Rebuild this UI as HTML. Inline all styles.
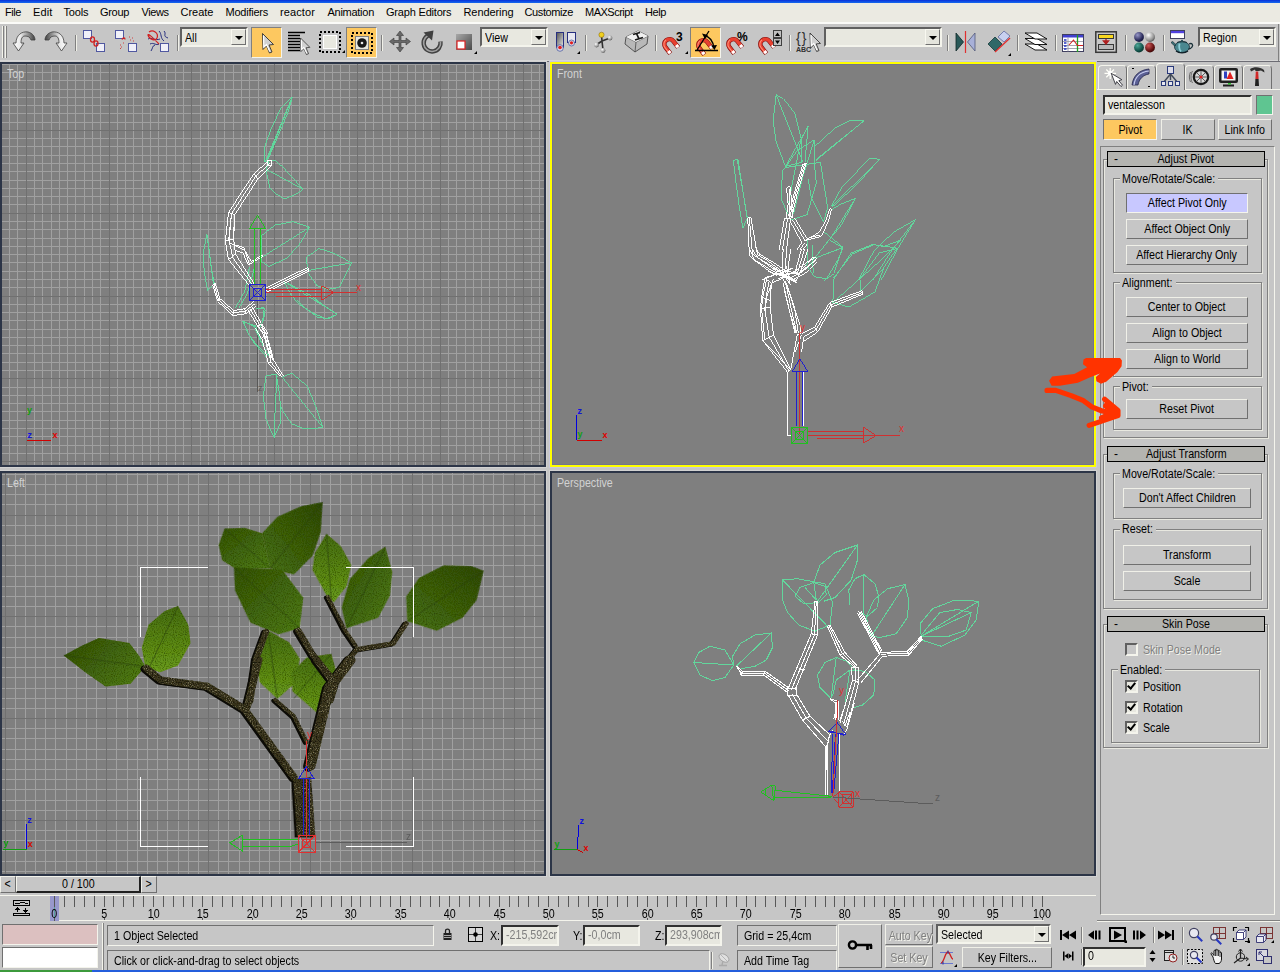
<!DOCTYPE html>
<html><head><meta charset="utf-8"><title>3ds Max</title>
<style>
html,body{margin:0;padding:0}
body{width:1280px;height:972px;position:relative;overflow:hidden;background:#c6c6c6;font-family:"Liberation Sans",sans-serif;font-size:12px;color:#000;line-height:13px}
.a{position:absolute}
svg{position:absolute;left:0;top:0;overflow:visible}
.vp{position:absolute;box-sizing:border-box;border:2px solid #2c3547;background:#7f7f7f;overflow:hidden}
.vp{box-shadow:0 0 0 1px #d2d2d2}
.vp.act{border-color:#ffff00;box-shadow:0 0 0 1px #c8c8dc}
.vl{position:absolute;left:5px;top:4px;color:#d2d2d2;font-size:12px;transform:scaleX(.89);transform-origin:0 0;white-space:nowrap}
.btn{position:absolute;box-sizing:border-box;border:1px solid;border-color:#f0f0e8 #707070 #707070 #f0f0e8;background:#c6c6c6;text-align:center;white-space:nowrap}
.sunk{position:absolute;box-sizing:border-box;border:1px solid;border-color:#707070 #f4f4ec #f4f4ec #707070;background:#c6c6c6;white-space:nowrap;overflow:hidden}
.fld{position:absolute;box-sizing:border-box;border:2px solid;border-color:#303030 #f4f4ec #f4f4ec #303030;background:#e8e8e0;white-space:nowrap;overflow:hidden}
.grp{position:absolute;box-sizing:border-box;border:1px solid #808080;box-shadow:1px 1px 0 #e8e8e0, inset 1px 1px 0 #e8e8e0}
.gl{position:absolute;background:#c6c6c6;padding:0 0 0 2px;white-space:nowrap;box-sizing:content-box}
.sep{position:absolute;width:1px;background:#808080;box-shadow:1px 0 0 #f0f0e8}
.mi{position:absolute;top:6px;white-space:nowrap;font-size:11px;line-height:12px}
.roll{position:absolute;box-sizing:border-box;border:1px solid #000;background:#b4b4b0;text-align:center;height:16px;line-height:14px}
.dd{position:absolute;box-sizing:border-box;border:2px solid;border-color:#606060 #f4f4ec #f4f4ec #606060;background:#e8e8e0;white-space:nowrap}
.dd .ar{position:absolute;right:0;top:0;bottom:0;width:15px;box-sizing:border-box;border:1px solid;border-color:#f8f8f0 #707070 #707070 #f8f8f0;background:#e4e4dc}
.dd .ar:after{content:"";position:absolute;left:3px;top:6px;border:4px solid transparent;border-top:4px solid #000;border-bottom:none}
.org{background:#fdc860 !important}
.t{display:inline-block;transform:scaleX(.89);transform-origin:50% 50%;white-space:nowrap}
.tl{display:inline-block;transform:scaleX(.89);transform-origin:0 50%;white-space:nowrap}
.lb{position:absolute;white-space:nowrap}
</style></head><body>

<div class="a" style="left:0;top:0;width:1280px;height:3px;background:linear-gradient(#0831d9,#166aee)"></div>
<div class="a" style="left:0;top:3px;width:1280px;height:19px;background:#ebeae2"></div>
<div class="a" style="left:0;top:22px;width:1280px;height:2px;background:#fbfbf8"></div>
<span class="mi" style="left:5px;letter-spacing:-0.43px">File</span>
<span class="mi" style="left:33px;letter-spacing:0.13px">Edit</span>
<span class="mi" style="left:63.5px;letter-spacing:-0.14px">Tools</span>
<span class="mi" style="left:100px;letter-spacing:-0.32px">Group</span>
<span class="mi" style="left:141.5px;letter-spacing:-0.43px">Views</span>
<span class="mi" style="left:180.5px;letter-spacing:-0.01px">Create</span>
<span class="mi" style="left:225.5px;letter-spacing:-0.24px">Modifiers</span>
<span class="mi" style="left:280px;letter-spacing:0.11px">reactor</span>
<span class="mi" style="left:327.5px;letter-spacing:-0.27px">Animation</span>
<span class="mi" style="left:386px;letter-spacing:-0.19px">Graph Editors</span>
<span class="mi" style="left:463.5px;letter-spacing:-0.09px">Rendering</span>
<span class="mi" style="left:524.5px;letter-spacing:-0.39px">Customize</span>
<span class="mi" style="left:585px;letter-spacing:-0.50px">MAXScript</span>
<span class="mi" style="left:645px;letter-spacing:-0.41px">Help</span>
<!-- ===== main toolbar ===== -->
<div class="a" style="left:0;top:60px;width:1280px;height:1px;background:#d6d6d6"></div><div class="a" style="left:0;top:61px;width:1280px;height:1px;background:#6c6c74"></div>
<div class="a" style="left:1278px;top:24px;width:1px;height:37px;background:#808080"></div>
<div class="a" style="left:2px;top:26px;width:1px;height:32px;background:#f4f4ec;box-shadow:1px 0 0 #808080,3px 0 0 #f4f4ec,4px 0 0 #808080"></div>
<div class="sep" style="left:75px;top:35px;height:16px"></div>
<div class="sep" style="left:177px;top:35px;height:16px"></div>
<div class="sep" style="left:381px;top:35px;height:16px"></div>
<div class="sep" style="left:585px;top:35px;height:16px"></div>
<div class="sep" style="left:655px;top:35px;height:16px"></div>
<div class="sep" style="left:789px;top:35px;height:16px"></div>
<div class="sep" style="left:947px;top:35px;height:16px"></div>
<div class="sep" style="left:1017px;top:35px;height:16px"></div>
<div class="sep" style="left:1055px;top:35px;height:16px"></div>
<div class="sep" style="left:1125px;top:35px;height:16px"></div>
<div class="sep" style="left:1163px;top:35px;height:16px"></div>
<div class="dd" style="left:180px;top:27px;width:68px;height:20px;padding:3px 0 0 3px;font-size:12px"><span class="tl">All</span><div class="ar"></div></div>
<div class="dd" style="left:480px;top:27px;width:68px;height:20px;padding:3px 0 0 3px;font-size:12px"><span class="tl">View</span><div class="ar"></div></div>
<div class="dd" style="left:824px;top:27px;width:118px;height:20px"><div class="ar"></div></div>
<div class="dd" style="left:1198px;top:27px;width:78px;height:20px;padding:3px 0 0 3px;font-size:12px"><span class="tl">Region</span><div class="ar"></div></div>
<div class="btn org" style="left:251px;top:27px;width:31px;height:31px;border-color:#808080 #f4f4ec #f4f4ec #808080"></div>
<div class="btn org" style="left:346px;top:27px;width:31px;height:31px;border-color:#808080 #f4f4ec #f4f4ec #808080"></div>
<div class="btn org" style="left:690px;top:27px;width:31px;height:31px;border-color:#808080 #f4f4ec #f4f4ec #808080"></div>
<svg width="1280" height="64" fill="none">
<defs>
 <linearGradient id="gm" x1="0" y1="0" x2="1" y2="0"><stop offset="0" stop-color="#ffffff"/><stop offset="0.35" stop-color="#e8e8e8"/><stop offset="1" stop-color="#404040"/></linearGradient>
 <linearGradient id="gm2" x1="0" y1="0" x2="1" y2="1"><stop offset="0" stop-color="#505050"/><stop offset="1" stop-color="#e8e8e8"/></linearGradient>
 <linearGradient id="gm3" x1="0" y1="0" x2="1" y2="1"><stop offset="0" stop-color="#a8a8a8"/><stop offset="1" stop-color="#484848"/></linearGradient>
 <linearGradient id="mag" x1="0" y1="0" x2="1" y2="1"><stop offset="0" stop-color="#ff7050"/><stop offset="1" stop-color="#c01818"/></linearGradient>
 <radialGradient id="sp1" cx="0.35" cy="0.3" r="0.8"><stop offset="0" stop-color="#9898c8"/><stop offset="0.7" stop-color="#282858"/><stop offset="1" stop-color="#101030"/></radialGradient>
 <radialGradient id="sp2" cx="0.35" cy="0.3" r="0.8"><stop offset="0" stop-color="#ffffff"/><stop offset="0.7" stop-color="#909090"/><stop offset="1" stop-color="#404040"/></radialGradient>
 <radialGradient id="sp3" cx="0.35" cy="0.3" r="0.8"><stop offset="0" stop-color="#50a898"/><stop offset="0.7" stop-color="#105048"/><stop offset="1" stop-color="#062820"/></radialGradient>
 <radialGradient id="sp4" cx="0.35" cy="0.3" r="0.8"><stop offset="0" stop-color="#d05858"/><stop offset="0.7" stop-color="#601010"/><stop offset="1" stop-color="#300404"/></radialGradient>
 <g id="magnet"><g transform="rotate(-38 8 9)">
  <path d="M3,16V8A5,5 0 0 1 13,8V16" stroke="#801010" stroke-width="4.600" fill="none"/>
  <path d="M3,15.500V8A5,5 0 0 1 13,8V15.500" stroke="#e84030" stroke-width="3.400" fill="none"/>
  <path d="M2.500,13V8A5.500,5.500 0 0 1 8,2.500" stroke="#ff9078" stroke-width="1" fill="none"/>
  <path d="M3,15.700V12.800M13,15.700V12.800" stroke="#fff" stroke-width="3.200"/>
 </g></g>
 <g id="cursor"><path d="M0,0L0.500,16L4,12.500L7,19.500L9.500,18.500L6.500,11.500L11,11Z" fill="#d0d0d0" stroke="#303030" stroke-width="0.9"/><path d="M1,2L1.300,13.500L4,11L7.300,18" stroke="#fff" stroke-width="1.200" fill="none"/></g>
</defs>
<!-- undo -->
<g transform="translate(13,30)">
 <path d="M3,13C3,5 9,1 15,2C19,3 22,6 22,10L18,10C17,7 15,6 12,6C9,6 8,9 8,13L11,13L5.5,21L0,13Z" fill="url(#gm)" stroke="#404040" stroke-width="0.8"/>
</g>
<g transform="translate(67,30) scale(-1,1)">
 <path d="M3,13C3,5 9,1 15,2C19,3 22,6 22,10L18,10C17,7 15,6 12,6C9,6 8,9 8,13L11,13L5.5,21L0,13Z" fill="url(#gm)" stroke="#404040" stroke-width="0.8"/>
</g>
<!-- link -->
<g transform="translate(83,30)">
 <rect x="0.5" y="0.5" width="8" height="8" fill="#f0f0f8" stroke="#5058a0"/><rect x="13.5" y="13.5" width="8" height="8" fill="#f0f0f8" stroke="#5058a0"/>
 <ellipse cx="9.5" cy="9.5" rx="2" ry="2.6" stroke="#d02020" stroke-width="1.3"/><ellipse cx="13" cy="13.5" rx="2" ry="2.6" stroke="#d02020" stroke-width="1.3"/>
</g>
<g transform="translate(115,30)">
 <rect x="0.5" y="0.5" width="8" height="8" fill="#f0f0f8" stroke="#5058a0"/><rect x="13.5" y="13.5" width="8" height="8" fill="#f0f0f8" stroke="#5058a0"/>
 <path d="M7,9.5C8,7.5 10,7.5 10,9.5" stroke="#d02020" stroke-width="1.3"/>
 <path d="M14,7H15M17,8H18M15,10H16M18,11H19M5,15H6M6,17H7M5,18.5H6M8,13H9" stroke="#d04040" stroke-width="1"/>
</g>
<g transform="translate(147,30)">
 <rect x="13.5" y="13.5" width="8" height="8" fill="#f0f0f8" stroke="#5058a0"/>
 <path d="M12,1C15,4 13,8 17,11M17,1C20,4 15,6 21,8M1,9C5,7 8,11 13,9M3,14C7,12 9,16 12,14M4,21C6,18 5,16 8,15" stroke="#283080" stroke-width="1"/>
 <path d="M2,2C6,-1 12,3 10,8C8,12 2,9 1,5C1,3 5,7 12,14" stroke="#d02020" stroke-width="1.2"/>
</g>
<!-- select -->
<use href="#cursor" transform="translate(262.500,33.500)"/>
<!-- select by name -->
<g transform="translate(288,31)"><path d="M0,1.5H17M0,4.5H12M0,7.5H12M0,10.500H12M0,13.5H12M0,16.5H12M0,19.5H12" stroke="#000" stroke-width="1.4"/>
<use href="#cursor" transform="translate(12.5,7) scale(0.85)"/></g>
<!-- rect region -->
<g transform="translate(319,31)"><rect x="1" y="1" width="20" height="20" stroke="#000" stroke-width="2" stroke-dasharray="2 2"/><rect x="4.500" y="4.500" width="13" height="13" fill="#e8e8e0" stroke="#fff"/></g>
<path d="M342,53h3v-3z" fill="#000"/>
<!-- window/crossing -->
<g transform="translate(351,32)"><rect x="1" y="1" width="20" height="20" stroke="#000" stroke-width="2" stroke-dasharray="2 2"/><rect x="4.500" y="4.500" width="13" height="13" fill="#e8e8e0" stroke="#808080"/><circle cx="11" cy="11" r="4.800" fill="#181818"/><circle cx="11" cy="11" r="1.300" fill="#e8e8e8"/></g>
<!-- move -->
<g transform="translate(389,31)" fill="#686868" stroke="#383838" stroke-width="0.6">
 <path d="M11,0L14.500,4.500H12V9.500H17V7L21.500,10.500L17,14V11.500H12V16.500H14.500L11,21L7.500,16.500H10V11.500H5V14L0.500,10.500L5,7V9.500H10V4.500H7.500Z"/>
</g>
<!-- rotate -->
<g transform="translate(421,31)">
 <path d="M10,3.500A8.500,8.500 0 1 0 19.500,10.500" stroke="#404040" stroke-width="4.400"/>
 <path d="M10,3.500A8.500,8.500 0 1 0 19.500,10.500" stroke="#a0a0a0" stroke-width="1.600"/>
 <path d="M2.500,1.500L12.500,-0.500L11,9.500Z" fill="#404040"/>
</g>
<!-- scale -->
<g transform="translate(456,34)"><rect x="0" y="0" width="16" height="16" fill="url(#gm3)"/><rect x="1" y="7" width="8" height="8" fill="#fff" stroke="#e02020" stroke-width="1.2"/></g>
<path d="M474,54h3v-3z" fill="#000"/>
<!-- pivot center -->
<g transform="translate(555,31)">
 <rect x="1.500" y="1.500" width="7" height="15" fill="url(#gm2)" stroke="#283080"/><circle cx="5" cy="17" r="3.300" stroke="#5060a0" fill="#d8d8e8" stroke-width="0.8"/><circle cx="5" cy="16.500" r="1.800" fill="#e02020"/>
 <rect x="12.500" y="1.500" width="8" height="10" fill="#e8e8f0" stroke="#283080"/><circle cx="16.500" cy="12" r="3" stroke="#5060a0" fill="#d8d8e8" stroke-width="0.8"/><circle cx="16.500" cy="11.800" r="1.600" fill="#e02020"/>
</g>
<path d="M577,54h3v-3z" fill="#000"/>
<!-- manipulate -->
<g transform="translate(594,32)">
 <path d="M8,9L7.500,3M8,9L16,6M8,9L2,13M8,9L9,18" stroke="#303030" stroke-width="1.600"/>
 <circle cx="7.500" cy="2.800" r="2.600" fill="#f0d020" stroke="#806000" stroke-width="0.5"/><circle cx="16" cy="6" r="2.400" fill="url(#sp2)"/><circle cx="2.500" cy="13" r="2.400" fill="url(#sp2)"/><circle cx="9" cy="18.500" r="2.400" fill="url(#sp2)"/>
</g>
<!-- keyboard shortcut override -->
<g transform="translate(625,31)">
 <path d="M1,6L13,0L23,5L22,13L10,21L0,13Z" fill="#b8b8b8" stroke="#383838" stroke-width="0.8"/>
 <path d="M1,6L11,11L23,5M11,11L10,21" stroke="#484848" stroke-width="0.8"/>
 <path d="M1,6L13,0L23,5L11,11Z" fill="#f0f0f0"/>
 <path d="M8,3.500L15,1.500M11.500,2.500L14,8M10,9L18,6.500" stroke="#181818" stroke-width="1.800"/>
</g>
<!-- snaps -->
<use href="#magnet" transform="translate(662,36)"/>
<text x="676" y="41" font-size="12" font-weight="bold" fill="#000" font-family="Liberation Sans">3</text>
<path d="M685,54h3v-3z" fill="#000"/>
<use href="#magnet" transform="translate(696,37)"/>
<path d="M695,50.500H718M697,50L709,31M704,35.500C709,36.500 713,41 714,48" stroke="#000" stroke-width="1.300" fill="none"/><path d="M702,33.500L708,35L705,39ZM711,45.500L717,45L714.500,50Z" fill="#000"/>
<use href="#magnet" transform="translate(726,36)"/>
<text x="737" y="41" font-size="12" font-weight="bold" fill="#000" font-family="Liberation Sans">%</text>
<use href="#magnet" transform="translate(758,36)"/>
<g transform="translate(773,30)"><rect x="0.500" y="0.500" width="8" height="7" fill="#c0c0c0" stroke="#404040"/><rect x="0.500" y="8.500" width="8" height="7" fill="#c0c0c0" stroke="#404040"/><path d="M2,6L4.500,2.500L7,6ZM2,10.500L4.500,14L7,10.500Z" fill="#000"/></g>
<!-- named selection sets -->
<g transform="translate(796,31)">
 <text x="0" y="12" font-size="14" fill="#303030" font-family="Liberation Sans" letter-spacing="1">{}</text>
 <text x="0" y="21" font-size="7" font-weight="bold" fill="#303030" font-family="Liberation Sans">ABC</text>
 <use href="#cursor" transform="translate(14,2) scale(0.95)"/>
</g>
<!-- mirror -->
<g transform="translate(955,32)">
 <path d="M1,1L8.500,10L1,19Z" fill="#285858" stroke="#102828" stroke-width="0.8"/>
 <path d="M20,1L12.500,10L20,19Z" fill="#a8b0d8" stroke="#505878" stroke-width="0.8"/>
 <path d="M10.500,-1V21" stroke="#e03030" stroke-width="1.200"/>
</g>
<!-- align -->
<g transform="translate(987,31)">
 <path d="M1,13L8,6L15,13L8,20Z" fill="#2f6868" stroke="#183838" stroke-width="0.8"/>
 <path d="M11,6L17,0L23,5L17,11Z" fill="#c8d0f0" stroke="#6068a0" stroke-width="0.8"/>
 <path d="M8,21L23,7" stroke="#e03030" stroke-width="1.400"/>
</g>
<path d="M1008,56h3v-3z" fill="#000"/>
<!-- layers -->
<g transform="translate(1025,32)" fill="#fff" stroke="#000" stroke-width="0.900">
 <path d="M0,12L12,12L22,18L10,18Z"/><path d="M0,6.500L12,6.500L22,12.500L10,12.500Z"/><path d="M0,1L12,1L22,7L10,7Z"/>
</g>
<!-- curve editor -->
<g transform="translate(1062,34)">
 <rect x="0.500" y="0.500" width="21" height="17" fill="#fff" stroke="#404060"/><rect x="1" y="1" width="20" height="2.500" fill="#4040d0"/>
 <path d="M6,3.500V17.500M1,7.500H21M1,11.500H21M1,14.500H21" stroke="#9090a0" stroke-width="0.8"/>
 <path d="M2,6H4.500M2,9H4.500M2,12H4.500M2,15H4.500" stroke="#2030c0" stroke-width="1.300"/>
 <path d="M15.500,1V18" stroke="#20a020" stroke-width="1.300"/>
 <path d="M7,11L11.500,6L15.500,11.500H21" stroke="#d02020" stroke-width="1.100"/>
</g>
<!-- schematic -->
<g transform="translate(1095,31)">
 <rect x="0.800" y="0.800" width="20.500" height="20.500" fill="#c8c8c8" stroke="#383838" stroke-width="1.500"/>
 <rect x="3.500" y="3.500" width="15" height="4" fill="#f8d820" stroke="#383838"/>
 <rect x="3.500" y="13.500" width="15" height="5" fill="#b8b8b8" stroke="#383838"/>
 <path d="M11,8V12M8.500,10L11,13L13.500,10Z" stroke="#b02020" fill="#b02020" stroke-width="1.300"/>
</g>
<!-- material editor -->
<circle cx="1139" cy="37" r="4.900" fill="url(#sp1)"/><circle cx="1150" cy="37" r="4.900" fill="url(#sp2)"/><circle cx="1139" cy="47.500" r="4.900" fill="url(#sp3)"/><circle cx="1150" cy="47.500" r="4.900" fill="url(#sp4)"/>
<!-- render scene -->
<g transform="translate(1170,30)">
 <rect x="0.500" y="0.500" width="14" height="8" fill="#fff" stroke="#404060"/><rect x="1" y="1" width="13" height="2.200" fill="#5040e0"/>
 <ellipse cx="12" cy="17" rx="7.500" ry="5.500" fill="#4a8890" stroke="#183038" stroke-width="0.8"/>
 <path d="M5,16C3,15.500 2.500,13 1,12.500L2.500,11.500C4,12.500 5,14 6,14.500Z" fill="#3a7078" stroke="#183038" stroke-width="0.7"/>
 <path d="M19,14C22,12.500 23.500,15 22,17C21,18.500 19.500,19 18.500,19" stroke="#183038" stroke-width="1.300" fill="none"/>
 <path d="M7,12.500C9,11.500 15,11.500 17,12.500" stroke="#183038" stroke-width="1"/><circle cx="12" cy="10.800" r="1.100" fill="#285058"/>
 <path d="M9.500,13.500C9,16 9.500,20 11,21.500" stroke="#90d0d8" stroke-width="1.800" fill="none"/>
 <path d="M6,21C9,23.500 15,23.500 18,21" stroke="#102028" stroke-width="1.200" fill="none"/>
</g>
</svg>

<!-- ===== command panel ===== -->
<!-- tabs -->
<div class="a" style="left:1097px;top:89px;width:183px;height:1px;background:#f4f4ec"></div>
<div class="a tab" style="left:1098px;top:65px;width:29px;height:24px"></div>
<div class="a tab" style="left:1127px;top:65px;width:29px;height:24px"></div>
<div class="a tab" style="left:1185px;top:65px;width:29px;height:24px"></div>
<div class="a tab" style="left:1214px;top:65px;width:29px;height:24px"></div>
<div class="a tab" style="left:1243px;top:65px;width:29px;height:24px"></div>
<div class="a tab" style="left:1156px;top:63px;width:29px;height:27px;background:#c6c6c6"></div>
<style>.tab{box-sizing:border-box;border:1px solid;border-color:#f4f4ec #707070 transparent #f4f4ec;border-bottom:none;border-radius:4px 4px 0 0}</style>
<svg width="1280" height="972" style="pointer-events:none" fill="none">
 <!-- tab1: create (cursor with star) -->
 <g>
  <path d="M1110.200,68V79M1104.500,73.300H1116M1106.300,69.500L1114,77.200M1114,69.500L1106.300,77.200" stroke="#fffff8" stroke-width="1.300"/>
  <circle cx="1110.200" cy="73.300" r="2.200" fill="#fff"/>
  <path d="M1111.200,73.300L1121.900,79.700L1118.800,80.700L1122.500,85.200L1121,86.500L1116.700,81.500L1115.500,84.400Z" fill="#fff" stroke="#303038" stroke-width="0.9"/>
 </g>
 <!-- tab2: modify (arc) -->
 <g transform="translate(1131,68)">
  <path d="M1,17C2,8 8,2 18,1L18,6C12,7 8,11 7,17Z" fill="#5a5f94" stroke="#23254a" stroke-width="0.8"/>
  <path d="M3,17C4,9 9,4 18,3" stroke="#c8cdf0" stroke-width="1.2"/>
  <path d="M1,0.5H3 M17,18.5H19" stroke="#000"/>
 </g>
 <!-- tab3: hierarchy -->
 <g transform="translate(1160,66)" shape-rendering="crispEdges">
  <path d="M10.5,8V14 M10.5,8L3,17 M10.5,8L18,17" stroke="#404858" stroke-width="1.4" shape-rendering="auto"/>
  <rect x="7.5" y="0.5" width="6" height="7" fill="#dcdce8" stroke="#2a3a7a"/>
  <rect x="1.5" y="15.5" width="4" height="4" fill="#e8e8f0" stroke="#2a3a7a"/>
  <rect x="8.5" y="15.5" width="4" height="4" fill="#e8e8f0" stroke="#2a3a7a"/>
  <rect x="15.5" y="15.5" width="4" height="4" fill="#e8e8f0" stroke="#2a3a7a"/>
 </g>
 <!-- tab4: motion (wheel) -->
 <g transform="translate(1189,68)">
  <circle cx="12" cy="9" r="7.2" stroke="#181818" stroke-width="2.2" fill="#d8d8d8"/>
  <path d="M12,3V15 M6,9H18 M7.8,4.8L16.2,13.2 M16.2,4.8L7.8,13.2" stroke="#404040" stroke-width="0.8"/>
  <circle cx="12" cy="9" r="1.6" fill="#e02020"/>
  <path d="M3.5,3C1.5,6 1.5,12 3.5,15 M1.5,4C0,7 0,11 1.5,14" stroke="#606060" stroke-width="0.9"/>
 </g>
 <!-- tab5: display (monitor) -->
 <g transform="translate(1218,67)">
  <rect x="1" y="1" width="19" height="15" rx="2" fill="#202020"/>
  <rect x="3.5" y="3.5" width="14" height="10" fill="#f4f4f4"/>
  <rect x="6" y="4.5" width="3" height="7" fill="#3040c0"/>
  <path d="M12,4.5L15.5,12H8.5Z" fill="#e02020"/>
  <path d="M5,18.5H16" stroke="#202020" stroke-width="2"/>
  <rect x="10" y="16" width="3" height="1.5" fill="#30c030"/>
 </g>
 <!-- tab6: utilities (hammer) -->
 <g transform="translate(1247,66)">
  <path d="M3,3C7,0.5 13,0.5 17,4L17.5,6.5L14,4.5L11.5,5L8.5,5L8,3.5L4,5.5Z" fill="#303030"/>
  <path d="M8.8,5.5H11.2L11.6,13H8.4Z" fill="#d02828"/>
  <path d="M8.4,13H11.6L12,20H8Z" fill="#202020"/>
 </g>
</svg>
<!-- name + colour -->
<div class="fld" style="left:1103px;top:95px;width:149px;height:20px;padding:2px 0 0 3px;line-height:13px"><span class="tl">ventalesson</span></div>
<div class="a" style="left:1256px;top:95px;width:17px;height:20px;box-sizing:border-box;border:1px solid;border-color:#707070 #f4f4ec #f4f4ec #707070;background:#5fc591"></div>
<div class="btn org" style="left:1103px;top:119px;width:54px;height:21px;line-height:20px;border-color:#707070 #f4f4ec #f4f4ec #707070"><span class="t">Pivot</span></div>
<div class="btn" style="left:1161px;top:119px;width:54px;height:21px;line-height:20px"><span class="t">IK</span></div>
<div class="btn" style="left:1218px;top:119px;width:54px;height:21px;line-height:20px"><span class="t">Link Info</span></div>
<!-- rollout container -->
<div class="a" style="left:1100px;top:146px;width:175px;height:769px;box-sizing:border-box;border:1px solid;border-color:#808080 #f4f4ec #f4f4ec #808080"></div>
<!-- rollout 1 -->
<div class="grp" style="left:1103px;top:159px;width:165px;height:279px"></div>
<div class="roll" style="left:1107px;top:151px;width:158px"><span class="t">Adjust Pivot</span><span class="a" style="left:6px;top:0">-</span></div>
<div class="grp" style="left:1113px;top:178px;width:149px;height:95px"></div>
<div class="gl" style="left:1120px;top:173px;width:96.2px;overflow:hidden"><span class="tl">Move/Rotate/Scale:</span></div>
<div class="btn" style="left:1126px;top:193px;width:122px;height:20px;line-height:18px;background:#c8c8ff;border-color:#707070 #f4f4ec #f4f4ec #707070"><span class="t">Affect Pivot Only</span></div>
<div class="btn" style="left:1126px;top:219px;width:122px;height:20px;line-height:18px"><span class="t">Affect Object Only</span></div>
<div class="btn" style="left:1126px;top:245px;width:122px;height:20px;line-height:18px"><span class="t">Affect Hierarchy Only</span></div>
<div class="grp" style="left:1113px;top:282px;width:149px;height:95px"></div>
<div class="gl" style="left:1120px;top:277px;width:53.5px;overflow:hidden"><span class="tl">Alignment:</span></div>
<div class="btn" style="left:1126px;top:297px;width:122px;height:20px;line-height:18px"><span class="t">Center to Object</span></div>
<div class="btn" style="left:1126px;top:323px;width:122px;height:20px;line-height:18px"><span class="t">Align to Object</span></div>
<div class="btn" style="left:1126px;top:349px;width:122px;height:20px;line-height:18px"><span class="t">Align to World</span></div>
<div class="grp" style="left:1113px;top:386px;width:149px;height:44px"></div>
<div class="gl" style="left:1120px;top:381px;width:29.7px;overflow:hidden"><span class="tl">Pivot:</span></div>
<div class="btn" style="left:1126px;top:399px;width:122px;height:20px;line-height:18px"><span class="t">Reset Pivot</span></div>
<!-- rollout 2 -->
<div class="grp" style="left:1103px;top:454px;width:165px;height:155px"></div>
<div class="roll" style="left:1107px;top:446px;width:158px"><span class="t">Adjust Transform</span><span class="a" style="left:6px;top:0">-</span></div>
<div class="grp" style="left:1113px;top:473px;width:149px;height:46px"></div>
<div class="gl" style="left:1120px;top:468px;width:96.2px;overflow:hidden"><span class="tl">Move/Rotate/Scale:</span></div>
<div class="btn" style="left:1123px;top:488px;width:128px;height:20px;line-height:18px"><span class="t">Don't Affect Children</span></div>
<div class="grp" style="left:1113px;top:529px;width:149px;height:71px"></div>
<div class="gl" style="left:1120px;top:523px;width:33.9px;overflow:hidden"><span class="tl">Reset:</span></div>
<div class="btn" style="left:1123px;top:545px;width:128px;height:20px;line-height:18px"><span class="t">Transform</span></div>
<div class="btn" style="left:1123px;top:571px;width:128px;height:20px;line-height:18px"><span class="t">Scale</span></div>
<!-- rollout 3 -->
<div class="grp" style="left:1103px;top:624px;width:165px;height:124px"></div>
<div class="roll" style="left:1107px;top:616px;width:158px"><span class="t">Skin Pose</span><span class="a" style="left:6px;top:0">-</span></div>
<div class="cb" style="left:1125px;top:643px;background:#c6c6c6"></div>
<div class="lb" style="left:1143px;top:644px;color:#808080;text-shadow:1px 1px 0 #f4f4ec"><span class="tl">Skin Pose Mode</span></div>
<div class="grp" style="left:1111px;top:669px;width:149px;height:74px"></div>
<div class="gl" style="left:1118px;top:664px;width:45.1px;overflow:hidden"><span class="tl">Enabled:</span></div>
<div class="cb ck" style="left:1125px;top:680px"></div><div class="lb" style="left:1143px;top:681px"><span class="tl">Position</span></div>
<div class="cb ck" style="left:1125px;top:701px"></div><div class="lb" style="left:1143px;top:702px"><span class="tl">Rotation</span></div>
<div class="cb ck" style="left:1125px;top:721px"></div><div class="lb" style="left:1143px;top:722px"><span class="tl">Scale</span></div>
<style>
.cb{position:absolute;width:13px;height:13px;box-sizing:border-box;border:2px solid;border-color:#606060 #f4f4ec #f4f4ec #606060;background:#e8e8e0}
.cb.ck:after{content:"";position:absolute;left:2px;top:-1px;width:3px;height:6px;border:solid #000;border-width:0 2px 2px 0;transform:rotate(40deg)}
</style>

<div class="vp" style="left:0px;top:62px;width:546px;height:405px">
<svg width="1280" height="972" style="left:-2px;top:-64px" fill="none" stroke-linecap="butt" stroke-linejoin="miter">
<g transform="translate(2,64)"><path d="M7.5,0V401M15.5,0V401M32.5,0V401M40.5,0V401M49.5,0V401M57.5,0V401M65.5,0V401M73.5,0V401M82.5,0V401M90.5,0V401M98.5,0V401M115.5,0V401M123.5,0V401M131.5,0V401M140.5,0V401M148.5,0V401M156.5,0V401M164.5,0V401M173.5,0V401M181.5,0V401M198.5,0V401M206.5,0V401M214.5,0V401M222.5,0V401M231.5,0V401M239.5,0V401M247.5,0V401M256.5,0V401M264.5,0V401M280.5,0V401M289.5,0V401M297.5,0V401M305.5,0V401M313.5,0V401M322.5,0V401M330.5,0V401M338.5,0V401M347.5,0V401M363.5,0V401M371.5,0V401M380.5,0V401M388.5,0V401M396.5,0V401M405.5,0V401M413.5,0V401M421.5,0V401M429.5,0V401M446.5,0V401M454.5,0V401M463.5,0V401M471.5,0V401M479.5,0V401M487.5,0V401M496.5,0V401M504.5,0V401M512.5,0V401M529.5,0V401M537.5,0V401M0,0.5H542M0,8.5H542M0,16.5H542M0,25.5H542M0,33.5H542M0,41.5H542M0,49.5H542M0,58.5H542M0,74.5H542M0,82.5H542M0,91.5H542M0,99.5H542M0,107.5H542M0,116.5H542M0,124.5H542M0,132.5H542M0,140.5H542M0,157.5H542M0,165.5H542M0,174.5H542M0,182.5H542M0,190.5H542M0,198.5H542M0,207.5H542M0,215.5H542M0,223.5H542M0,240.5H542M0,248.5H542M0,256.5H542M0,265.5H542M0,273.5H542M0,281.5H542M0,289.5H542M0,298.5H542M0,306.5H542M0,323.5H542M0,331.5H542M0,339.5H542M0,347.5H542M0,356.5H542M0,364.5H542M0,372.5H542M0,381.5H542M0,389.5H542" stroke="#a0a0a0" stroke-width="1" fill="none" shape-rendering="crispEdges"/><path d="M24.5,0V401M107.5,0V401M189.5,0V401M272.5,0V401M355.5,0V401M438.5,0V401M521.5,0V401M0,66.5H542M0,149.5H542M0,232.5H542M0,314.5H542M0,397.5H542" stroke="#707070" stroke-width="1" fill="none" shape-rendering="crispEdges"/></g>
<g shape-rendering="crispEdges">
<!-- dark axis line + z -->
<path d="M257.5,300V392" stroke="#585858" stroke-width="1"/>
<text x="258" y="391" fill="#5a5a5a" stroke="none" font-size="9" font-family="Liberation Sans">z</text>
<!-- zoom A: origin 180,80 s=5.4 -->
<g transform="translate(180,80) scale(0.185185)" stroke-width="5.4">
 <g stroke="#62d69c">
  <path d="M455,440L455,365L490,270L545,150L607,90L585,170L560,230L500,370L470,440Z M607,90L470,435 M600,105L462,440"/>
  <path d="M480,435L515,435L555,470L665,590L620,620L565,642L510,610L485,580L465,490Z M465,482L665,590"/>
 </g>
 <g stroke="#fff">
  <path d="M478,437L400,505L262,715L245,870 M488,448L410,518L278,722L262,870 M493,462L420,535L295,728L288,860 M470,435H495V462H470Z M400,505L420,535 M262,715L295,728"/>
 </g>
</g>
<!-- zoom B: origin 180,180 s=5.4 -->
<g transform="translate(180,180) scale(0.185185)" stroke-width="5.4">
 <g stroke="#62d69c">
  <path d="M440,300L515,243L610,225L700,255L650,340L580,420L480,468L440,440Z M430,425L700,255"/>
  <path d="M690,478L680,420L750,370L830,395L927,447L890,520L860,580L800,590L740,570L690,500 M695,488L927,447"/>
  <path d="M565,550L600,620L640,670L720,720L790,750L850,725L780,680L700,620Z M565,550L850,725"/>
  <path d="M145,290L130,370L125,440L135,520L150,598L185,560L170,480L160,400Z M145,290L180,560"/>
  <path d="M300,690L350,600L375,470 M320,690L365,610L400,480 M340,762L370,830L400,880L470,960 M340,762L400,790L440,880 M440,690L460,700L450,760"/>
 </g>
 <g stroke="#fff">
  <path d="M262,175L245,330L262,430L375,570 M278,180L265,325L285,420L390,565 M295,188L290,320L300,400L400,560 M245,330L290,320 M262,430L300,400"/>
  <path d="M262,340L345,365L375,455L450,410 M290,350L350,380L385,440L445,405 M300,380L340,395L370,460 M345,365L350,380 M450,410L445,405"/>
  <path d="M462,585L690,472 M466,596L694,481 M470,605L697,490 M690,472L697,490"/>
  <path d="M190,555L215,640L290,705L350,695L400,655 M183,562L208,648L287,718L352,708L405,668 M178,570L203,655L285,732L355,722L412,682 M190,555L178,570 M215,640L203,655 M290,705L285,732 M350,695L355,722"/>
  <path d="M365,700L420,790L455,830L490,960 M378,695L432,785L465,835L500,972 M390,688L442,778L475,828 M420,790L442,778 M455,830L475,828"/>
 </g>
 <!-- gizmo -->
 <g stroke="#20c020">
  <path d="M403,262V563 M437,262V563 M375,262H462L418,190Z"/>
 </g>
 <g stroke="#d03030">
  <path d="M462,607H955 M462,590H765 M520,628H765 M765,570V650L830,607Z"/>
 </g>
 <g stroke="#2020d0">
  <path d="M375,563H462V650H375Z M375,563L462,650 M462,563L375,650 M397,585H440V628H397Z"/>
 </g>
</g>
<text x="356" y="291" fill="#e03030" stroke="none" font-size="10" font-family="Liberation Sans">x</text>
<!-- zoom C: origin 180,300 s=5.818 -->
<g transform="translate(180,300) scale(0.17188)" stroke-width="5.818">
 <g stroke="#62d69c">
  <path d="M365,125L400,200L445,260L520,330 M365,125L440,150L480,260L520,330 M440,50L490,45L480,130L460,170"/>
  <path d="M500,440L560,432L575,520L585,620L585,715L547,800L520,740L500,690L485,560Z M565,440L555,600L547,800"/>
  <path d="M595,450L650,425L740,500L790,620L830,740L780,748L720,748L650,720L600,650L585,620 M595,450L830,740"/>
  <path d="M680,0L720,40L800,100L860,110L915,85L850,40L790,0"/>
 </g>
 <g stroke="#fff">
  <path d="M455,150L490,210L530,360L595,450 M470,140L505,205L545,350L600,440 M440,160L475,220L515,370L585,445 M490,210L475,220 M530,360L515,370"/>
 </g>
</g>
<!-- tripod -->
<path d="M27,440.5H51" stroke="#d00000" stroke-width="1"/>
</g>
<g stroke="none" font-family="Liberation Sans" font-size="9" font-weight="bold">
<text x="27.5" y="438" fill="#1010e0">z</text><text x="52.5" y="438" fill="#e00000">x</text><text x="27" y="413" fill="#10a010">y</text>
</g>

</svg><div class="vl">Top</div></div>
<div class="vp act" style="left:550px;top:62px;width:546px;height:405px">
<div class="a" style="left:0;top:0;right:0;bottom:0;border:1px solid #73738f"></div>
<svg width="1280" height="972" style="left:-552px;top:-64px" fill="none" stroke-linecap="butt" stroke-linejoin="miter">
<g shape-rendering="crispEdges">
<!-- F1: origin 700,80 s=4.858 -->
<g transform="translate(700,80) scale(0.205846)" stroke-width="4.858">
 <g stroke="#62d69c">
  <path d="M370,72L405,90L460,160L480,240L495,300L495,400L415,420L370,300L355,200Z M370,72L500,400"/>
  <path d="M555,325L660,230L725,198L797,198L740,245L565,390 M797,198L565,385 M565,390L600,360"/>
  <path d="M525,225L415,420 M525,225L510,400 M525,225L490,290L430,600 M555,290L470,345L415,425 M555,290L555,400 M555,290L500,470L455,650"/>
  <path d="M415,425L585,400L620,620L600,690L540,570L525,480 M400,440L395,580L440,680L520,655L565,500L555,400 M415,425L400,440"/>
  <path d="M162,392L180,385L205,520L230,670L208,720L190,610L175,500Z M185,390L228,665"/>
  <path d="M640,610L690,520L825,380L872,385L760,510L640,620 M872,385L640,615"/>
  <path d="M755,575L680,605L640,630 M755,575L690,700L560,860 M755,575L640,760L530,900"/>
  <path d="M600,740L693,815L650,940L600,972 M550,940L545,800 M693,815L560,865"/>
  <path d="M1047,678L940,740L845,830L770,972 M1047,678L960,820L880,972 M845,800L950,815 M740,845L845,800 M740,845L650,960 M1047,678L930,830L840,972"/>
 </g>
 <g stroke="#fff">
  <path d="M232,668H248 M232,668L240,850L270,880 M240,668L255,845L290,870 M248,668L280,850L320,872"/>
  <path d="M410,675L385,826 M440,675L420,826 M425,675L400,826 M410,675H440"/>
  <path d="M420,525L430,515L440,525L445,600L452,670 M420,525L428,600L418,670 M433,530L437,670"/>
  <path d="M515,405L470,560L445,670 M500,410L455,560L430,660 M508,408L462,560L437,665 M500,410L520,405"/>
  <path d="M450,680L510,780L580,740L612,680L630,625 M440,690L495,790 M460,672L520,770L585,752 M590,760L622,690L640,625 M630,620L642,630 M510,780L590,760"/>
  <path d="M495,790L470,826 M525,790L500,826 M510,790L485,826"/>
  <path d="M330,930L400,950L470,935 M300,972L380,940L450,972 M370,950L440,920 M320,872L400,930 M290,870L380,935 M270,880L360,945 M565,870L500,930L440,960 M570,885L510,940L455,968 M555,862L490,922"/>
 </g>
</g>
<!-- F2: origin 700,240 s=4.629 -->
<g transform="translate(700,240) scale(0.216029)" stroke-width="4.629">
 <g stroke="#62d69c">
  <path d="M500,0L495,120L530,170L585,180L640,90L660,35L600,0 M530,85L660,35"/>
  <path d="M615,290L620,180L700,60L800,20L850,30L930,0 M615,290L690,310L760,270L810,240L850,130L910,40 M745,235L740,180L830,60L910,40 M745,235L850,130 M615,290L830,100L930,0"/>
 </g>
 <g stroke="#fff">
  <path d="M240,40L265,80L340,125L380,150 M255,30L275,65L350,110L395,140 M232,45L250,90L330,140 M265,80L275,65"/>
  <path d="M385,40L380,150 M420,40L405,150 M402,40L392,150"/>
  <path d="M470,40L440,150 M500,40L460,160 M485,40L450,155"/>
  <path d="M540,85L520,105L440,165 M530,75L500,100L430,150 M540,85L525,80 M535,95L450,160"/>
  <path d="M330,140L450,200 M340,125L440,190 M380,150L420,210 M395,140L460,160L440,200 M350,160L430,130 M360,180L450,140"/>
  <path d="M380,150L300,175L285,265L280,320L290,465L405,612 M400,170L330,200L325,310L340,440L420,600 M300,175L330,200 M285,265L325,280 M280,320L325,310 M290,465L340,440 M340,180L310,260L300,330 M290,465L420,600"/>
  <path d="M380,170L410,230L465,400L465,430 M400,200L440,330L455,430 M390,230L440,430"/>
  <path d="M420,600L450,440L470,430 M440,520L470,440 M470,520L480,450"/>
  <path d="M470,435L530,405L600,290L750,235 M480,470L545,425L610,310L755,250 M475,452L537,415L605,300L752,243 M600,290L610,310 M750,235L755,250 M530,405L545,425"/>
  <path d="M405,612V905H423 M405,612L420,600 M480,612V860"/>
  <path d="M310,175L290,265L285,320L300,460 M320,190L305,270L300,320L320,450L412,606 M395,190L425,330L448,430 M385,200L415,330L445,432 M340,130L400,165L450,190 M350,150L420,175 M365,165L440,150 M380,130L430,190 M400,120L415,200 M300,175L380,150 M330,200L400,170 M285,265L300,175 M325,280L330,200"/>
 </g>
 <g stroke="#d03030">
  <path d="M460,430V900 M498,905H925 M498,888H757 M540,920H757 M757,867V940L815,905Z"/>
 </g>
 <g stroke="#2020d0">
  <path d="M445,607V860 M475,607V860 M428,607H498L462,550Z"/>
 </g>
 <g stroke="#20c020">
  <path d="M423,867H498V942H423Z M423,867L498,942 M498,867L423,942 M442,886H480V924H442Z"/>
 </g>
</g>
<!-- tripod -->
<path d="M576.5,415V440" stroke="#0000e0" stroke-width="1"/>
<path d="M577,440.5H602" stroke="#d00000" stroke-width="1"/>
</g>
<g stroke="none" font-family="Liberation Sans" font-size="9" font-weight="bold">
<text x="577.5" y="413.5" fill="#1010e0">z</text><text x="602.5" y="438" fill="#e00000">x</text><text x="577.5" y="437" fill="#10a010">y</text>
</g>
<g stroke="none" font-family="Liberation Sans" font-size="10">
<text x="899" y="432" fill="#e03030">x</text><text x="800" y="331" fill="#e03030">y</text>
</g>

</svg><div class="vl">Front</div></div>
<div class="vp" style="left:0px;top:471px;width:546px;height:405px">
<svg width="1280" height="972" style="left:-2px;top:-473px" fill="none" stroke-linecap="butt" stroke-linejoin="miter">
<g transform="translate(2,473)"><path d="M13.5,0V401M23.5,0V401M33.5,0V401M43.5,0V401M53.5,0V401M64.5,0V401M74.5,0V401M84.5,0V401M94.5,0V401M114.5,0V401M125.5,0V401M135.5,0V401M145.5,0V401M155.5,0V401M165.5,0V401M176.5,0V401M186.5,0V401M196.5,0V401M216.5,0V401M226.5,0V401M237.5,0V401M247.5,0V401M257.5,0V401M267.5,0V401M277.5,0V401M288.5,0V401M298.5,0V401M318.5,0V401M328.5,0V401M338.5,0V401M349.5,0V401M359.5,0V401M369.5,0V401M379.5,0V401M389.5,0V401M400.5,0V401M420.5,0V401M430.5,0V401M440.5,0V401M450.5,0V401M461.5,0V401M471.5,0V401M481.5,0V401M491.5,0V401M501.5,0V401M522.5,0V401M532.5,0V401M0,1.5H542M0,11.5H542M0,21.5H542M0,31.5H542M0,52.5H542M0,62.5H542M0,72.5H542M0,82.5H542M0,92.5H542M0,103.5H542M0,113.5H542M0,123.5H542M0,133.5H542M0,153.5H542M0,164.5H542M0,174.5H542M0,184.5H542M0,194.5H542M0,204.5H542M0,215.5H542M0,225.5H542M0,235.5H542M0,255.5H542M0,265.5H542M0,276.5H542M0,286.5H542M0,296.5H542M0,306.5H542M0,316.5H542M0,327.5H542M0,337.5H542M0,357.5H542M0,367.5H542M0,377.5H542M0,388.5H542M0,398.5H542" stroke="#a0a0a0" stroke-width="1" fill="none" shape-rendering="crispEdges"/><path d="M3.5,0V401M104.5,0V401M206.5,0V401M308.5,0V401M410.5,0V401M512.5,0V401M0,42.5H542M0,143.5H542M0,245.5H542M0,347.5H542" stroke="#707070" stroke-width="1" fill="none" shape-rendering="crispEdges"/></g>
<defs>
 <filter id="nz" x="0" y="0" width="100%" height="100%">
  <feTurbulence type="fractalNoise" baseFrequency="0.9" numOctaves="1" seed="3" result="t"/>
  <feColorMatrix in="t" type="matrix" values="0 0 0 0 0  0 0 0 0 0  0 0 0 0 0  2.5 0 0 0 -1.15" result="a"/>
  <feFlood flood-color="#2c4409" result="f"/>
  <feComposite in="f" in2="a" operator="in" result="sp"/>
  <feComposite in="sp" in2="SourceAlpha" operator="in" result="sp2"/>
  <feMerge><feMergeNode in="SourceGraphic"/><feMergeNode in="sp2"/></feMerge>
 </filter>
 <filter id="nzs" x="-5%" y="-5%" width="110%" height="110%">
  <feTurbulence type="fractalNoise" baseFrequency="0.95" numOctaves="1" seed="8" result="t"/>
  <feColorMatrix in="t" type="matrix" values="0 0 0 0 0  0 0 0 0 0  0 0 0 0 0  4 0 0 0 -2.35" result="a"/>
  <feFlood flood-color="#918b68" result="f"/>
  <feComposite in="f" in2="a" operator="in" result="sp"/>
  <feComposite in="sp" in2="SourceAlpha" operator="in" result="sp2"/>
  <feTurbulence type="fractalNoise" baseFrequency="0.8" numOctaves="1" seed="23" result="t2"/>
  <feColorMatrix in="t2" type="matrix" values="0 0 0 0 0  0 0 0 0 0  0 0 0 0 0  4 0 0 0 -1.75" result="a2"/>
  <feFlood flood-color="#1c1a0a" result="f2"/>
  <feComposite in="f2" in2="a2" operator="in" result="sd"/>
  <feComposite in="sd" in2="SourceAlpha" operator="in" result="sd2"/>
  <feMerge><feMergeNode in="SourceGraphic"/><feMergeNode in="sd2"/><feMergeNode in="sp2"/></feMerge>
 </filter>
 <linearGradient id="lg1" x1="0" y1="0" x2="1" y2="1"><stop offset="0" stop-color="#34520e"/><stop offset="1" stop-color="#4f7c18"/></linearGradient>
 <linearGradient id="lg2" x1="0" y1="0" x2="0" y2="1"><stop offset="0" stop-color="#466c12"/><stop offset="1" stop-color="#6a9c1c"/></linearGradient>
 <linearGradient id="lg3" x1="1" y1="0" x2="0" y2="1"><stop offset="0" stop-color="#2e480c"/><stop offset="1" stop-color="#4a7416"/></linearGradient>
 <linearGradient id="lg4" x1="0" y1="0" x2="1" y2="0.6"><stop offset="0" stop-color="#314c0e"/><stop offset="1" stop-color="#4e7816"/></linearGradient>
</defs>
<g stroke="none" filter="url(#nz)">
<!-- LV1: origin 40,480 s=4.419 -->
<g transform="translate(40,480) scale(0.226296)">
 <path d="M105,775L180,735L260,698L395,720L440,780L465,825L400,900L290,912L200,850Z" fill="url(#lg4)"/>
 <path d="M465,825L450,740L480,640L550,580L610,557L655,640L665,720L610,820L530,850Z" fill="url(#lg2)"/>
</g>
<!-- LV2: origin 200,490 s=4.267 -->
<g transform="translate(200,490) scale(0.234357)">
 <path d="M235,690L290,600L380,650L425,720L410,820L330,890L255,820Z" fill="url(#lg2)"/>
 <path d="M390,780L455,715L560,700L585,790L530,896L510,960L395,860Z" fill="url(#lg2)"/>
 <path d="M80,235L105,165L190,162L265,185L300,335L150,335L95,300Z" fill="url(#lg1)"/>
 <path d="M265,185L330,115L430,70L523,52L515,180L480,280L400,360L300,335Z" fill="url(#lg3)"/>
 <path d="M145,330L350,340L440,460L425,590L335,615L215,565L150,430Z" fill="url(#lg1)"/>
 <path d="M480,340L490,270L540,188L600,240L645,320L625,410L570,480L540,450Z" fill="url(#lg2)"/>
 <path d="M605,500L640,380L720,290L790,243L820,350L810,450L760,545L625,590Z" fill="url(#lg1)"/>
 <path d="M880,455L935,375L1040,322L1160,325L1210,345L1180,470L1120,545L1010,600L885,560Z" fill="url(#lg3)"/>
</g>
</g>
<!-- leaf veins -->
<g stroke="#2c4210" stroke-width="1" opacity="0.7">
<g transform="translate(200,490) scale(0.234357)" stroke-width="4">
 <path d="M523,52L300,335 M105,165L300,335 M150,335L425,590 M540,188L560,470 M790,243L625,590 M1210,345L885,560 M290,600L330,890 M560,700L400,890"/>
</g>
<g transform="translate(40,480) scale(0.226296)" stroke-width="4">
 <path d="M105,775L465,825 M610,557L480,835"/>
</g>
</g>
<!-- stem shadows -->
<g stroke="#0c0b06" fill="none" stroke-linecap="round" stroke-linejoin="round" transform="translate(-2.2,1)">
<g transform="translate(40,480) scale(0.226296)">
 <path d="M465,830L545,890L750,915L860,980" stroke-width="22"/>
</g>
<g transform="translate(200,490) scale(0.234357)">
 <path d="M282,605L240,720L215,900" stroke-width="26"/>
 <path d="M420,600L480,700L560,800" stroke-width="26"/>
 <path d="M545,455L620,600L665,665" stroke-width="15"/>
 <path d="M880,570L825,655L670,680L600,770L560,900" stroke-width="20"/>
</g>
<g transform="translate(130,660) scale(0.234357)">
 <path d="M70,35L130,85L330,112L490,210L700,500" stroke-width="30"/>
 <path d="M550,0L500,200" stroke-width="30"/>
 <path d="M620,170L700,240L755,350" stroke-width="16"/>
 <path d="M940,0L850,120L770,450" stroke-width="44"/>
 <path d="M790,0L850,80" stroke-width="18"/>
 <path d="M698,510L772,500L790,752L713,752Z" fill="#0c0b06" stroke-width="1"/>
</g>
</g>
<!-- stems -->
<g stroke="#3c3922" fill="none" stroke-linecap="round" stroke-linejoin="round" filter="url(#nzs)">
<g transform="translate(40,480) scale(0.226296)">
 <path d="M465,830L545,890L750,915L860,980" stroke-width="22"/>
</g>
<g transform="translate(200,490) scale(0.234357)">
 <path d="M282,605L240,720L215,900" stroke-width="26"/>
 <path d="M420,600L480,700L560,800" stroke-width="26"/>
 <path d="M545,455L620,600L665,665" stroke-width="15"/>
 <path d="M880,570L825,655L670,680L600,770L560,900" stroke-width="20"/>
</g>
<g transform="translate(130,660) scale(0.234357)">
 <path d="M70,35L130,85L330,112L490,210L700,500" stroke-width="30"/>
 <path d="M550,0L500,200" stroke-width="30"/>
 <path d="M620,170L700,240L755,350" stroke-width="16"/>
 <path d="M940,0L850,120L770,450" stroke-width="44"/>
 <path d="M790,0L850,80" stroke-width="18"/>
 <path d="M698,510L772,500L790,752L713,752Z" fill="#3c3922" stroke-width="1"/>
</g>
</g>
<!-- selection brackets -->
<g shape-rendering="crispEdges" stroke="#fff" stroke-width="1">
<path d="M208,567.5H140.5V637 M346,567.5H413.5V637 M140.5,777V846.5H208 M346,846.5H413.5V777"/>
</g>
<!-- gizmo -->
<g shape-rendering="crispEdges">
<g transform="translate(130,660) scale(0.234357)" stroke-width="4.267">
 <path d="M790,780H1180" stroke="#5c5c5c"/>
 <path d="M752,345V780" stroke="#e03030"/>
 <path d="M718,748H790V820H718Z M718,748L790,820 M790,748L718,820 M736,766H772V802H736Z" stroke="#e03030"/>
 <path d="M740,505V748 M765,505V748 M720,505H785L752,455Z" stroke="#2020d0"/>
 <path d="M480,765H718 M480,797H680L718,785 M480,748V815L425,780Z" stroke="#20c020"/>
</g>
<path d="M26.5,824V849" stroke="#0000e0" stroke-width="1"/>
<path d="M3,849.5H27" stroke="#10a010" stroke-width="1"/>
</g>
<g stroke="none" font-family="Liberation Sans" font-size="9" font-weight="bold">
<text x="27.5" y="822.5" fill="#1010e0">z</text><text x="27.5" y="847" fill="#e00000">x</text><text x="3.5" y="846" fill="#10a010">y</text>
</g>
<g stroke="none" font-family="Liberation Sans" font-size="10">
<text x="307" y="738" fill="#e03030">y</text><text x="406" y="840" fill="#5c5c5c">z</text>
</g>

</svg><div class="vl">Left</div></div>
<div class="vp" style="left:550px;top:471px;width:546px;height:405px">
<svg width="1280" height="972" style="left:-552px;top:-473px" fill="none" stroke-linecap="butt" stroke-linejoin="miter">
<g shape-rendering="crispEdges">
<!-- P: origin 680,530 s=4 -->
<g transform="translate(680,530) scale(0.25)" stroke-width="4">
 <g stroke="#62d69c">
  <path d="M55,530L75,490L120,465L180,480L215,540L180,590L130,603L80,580Z M55,530L215,540"/>
  <path d="M215,540L210,505L240,455L300,420L365,412L370,470L345,520L300,545L245,555 M365,412L225,545"/>
  <path d="M410,200L470,195L580,215L610,290L600,380L540,405L475,380L430,330L410,280Z M410,200L590,385"/>
  <path d="M545,280L535,210L560,140L620,90L710,60L710,120L685,200L620,270L575,285 M710,60L550,285"/>
  <path d="M460,265L480,230L535,210L580,225L585,260L555,290L495,295Z M500,230L545,280"/>
  <path d="M680,300L675,240L700,195L735,178L780,215L795,265L790,310L750,345L720,330 M735,178L735,340"/>
  <path d="M765,425L745,350L775,280L830,235L900,218L915,280L910,350L865,415L800,430Z M900,218L765,425"/>
  <path d="M965,425L960,375L1010,315L1100,280L1195,285L1185,360L1140,420L1045,465L965,440 M965,420L1040,330L1110,318L1165,330L1145,400L1075,425L965,425 M1195,285L965,425 M1165,330L965,425"/>
  <path d="M600,670L560,630L550,580L580,530L625,510L665,525L700,560 M625,510L605,670"/>
  <path d="M610,665L625,600L680,560L740,565L780,600L775,660L730,700L690,712 M680,560L660,690"/>
 </g>
 <g stroke="#fff">
  <path d="M230,545L245,580L335,580L430,650 M225,545L250,565L340,565L440,635 M228,550L248,572L338,572L435,643 M335,580L340,565 M245,580L250,565"/>
  <path d="M430,640L525,415L540,285 M460,640L550,420L550,285 M445,640L538,418L545,285 M540,285H550 M525,415L550,420 M475,555L500,560"/>
  <path d="M430,655L490,760L585,870 M465,655L520,745L600,820 M430,635H465V660H430Z M490,760L520,745 M585,870L600,820 M448,655L505,752L592,845"/>
  <path d="M590,385L640,500L700,550 M600,380L660,490L710,545 M595,382L650,495L705,548 M590,385L600,380 M640,500L660,490"/>
  <path d="M685,550L690,600L640,770 M715,550L715,610L670,780 M700,550L702,605L655,775 M685,550H715 M690,600L715,610"/>
  <path d="M710,600L800,495L715,330 M725,610L810,505 M800,490L910,485L965,425 M810,505L915,500L970,435 M805,497L912,492L967,430 M720,328L805,490 M710,332L795,495 M725,325L808,485 M712,325L722,332 M910,485L915,500"/>
  <path d="M600,675L620,690L620,760 M635,685L635,760 M600,675L635,685 M627,688L627,760"/>
  <path d="M585,870V960 M600,820L610,800"/>
 </g>
</g>
<!-- P2: origin 740,700 s=5.818 -->
<g transform="translate(740,700) scale(0.17188)" stroke-width="5.818">
 <g stroke="#fff">
  <path d="M497,275V560 M510,265V555 M580,200V540 M497,275L510,265L520,200 M560,60L545,110 M600,60L580,120 M640,70L610,150 M665,20L625,160 M590,120L625,160L600,200"/>
 </g>
 <g stroke="#2020d0">
  <path d="M515,185L615,200L565,130Z M540,200L530,540 M575,200L545,540 M555,200L537,545 M525,180L605,205"/>
 </g>
 <g stroke="#d03030">
  <path d="M570,0L540,560 M575,535H660V625H575Z M575,535L660,625 M660,535L575,625 M595,550H650V600H595Z M540,565L580,535 M545,575L575,600"/>
 </g>
 <g stroke="#20c020">
  <path d="M530,560L200,525 M530,565L200,570 M120,535L185,495L195,585Z M185,495L205,500L200,580L195,585 M150,515V560 M510,560H535"/>
 </g>
 <path d="M540,565L1120,605" stroke="#5c5c5c"/>
</g>
<!-- tripod -->
<path d="M578.5,825V837 M577.5,837V849" stroke="#0000e0" stroke-width="1"/>
<path d="M554,849.5H577" stroke="#10a010" stroke-width="1"/>
<path d="M577,849.5L583,852.5" stroke="#d00000" stroke-width="1"/>
</g>
<g stroke="none" font-family="Liberation Sans" font-size="9" font-weight="bold">
<text x="579.5" y="823.5" fill="#1010e0">z</text><text x="583.5" y="851" fill="#e00000">x</text><text x="554.5" y="847" fill="#10a010">y</text>
</g>
<g stroke="none" font-family="Liberation Sans" font-size="10">
<text x="855" y="797" fill="#e03030">x</text><text x="839" y="694" fill="#e03030">y</text><text x="935" y="801" fill="#5c5c5c">z</text>
</g>

</svg><div class="vl">Perspective</div></div>
<div class="btn" style="left:0;top:876px;width:16px;height:17px;line-height:14px;font-size:12px"><span class="t">&lt;</span></div>
<div class="btn" style="left:16px;top:876px;width:125px;height:17px;line-height:15px;font-size:12px;border-color:#f4f4ec #202020 #202020 #f4f4ec;border-width:1px 2px 2px 1px"><span class="t">0 / 100</span></div>
<div class="btn" style="left:141px;top:876px;width:16px;height:17px;line-height:14px;font-size:12px"><span class="t">&gt;</span></div>
<svg width="1280" height="972" fill="none" shape-rendering="crispEdges">
<rect x="50" y="896" width="9" height="25" fill="#9898cc"/><path d="M54.5,896V921" stroke="#58a098"/>
<path d="M54.5,896V907M54.5,918V921M64.5,896V907M74.5,896V907M84.5,896V907M94.5,896V907M104.5,896V907M104.5,918V921M113.5,896V907M123.5,896V907M133.5,896V907M143.5,896V907M153.5,896V907M153.5,918V921M163.5,896V907M173.5,896V907M183.5,896V907M192.5,896V907M202.5,896V907M202.5,918V921M212.5,896V907M222.5,896V907M232.5,896V907M242.5,896V907M252.5,896V907M252.5,918V921M262.5,896V907M271.5,896V907M281.5,896V907M291.5,896V907M301.5,896V907M301.5,918V921M311.5,896V907M321.5,896V907M331.5,896V907M341.5,896V907M351.5,896V907M351.5,918V921M360.5,896V907M370.5,896V907M380.5,896V907M390.5,896V907M400.5,896V907M400.5,918V921M410.5,896V907M420.5,896V907M430.5,896V907M439.5,896V907M449.5,896V907M449.5,918V921M459.5,896V907M469.5,896V907M479.5,896V907M489.5,896V907M499.5,896V907M499.5,918V921M509.5,896V907M518.5,896V907M528.5,896V907M538.5,896V907M548.5,896V907M548.5,918V921M558.5,896V907M568.5,896V907M578.5,896V907M588.5,896V907M597.5,896V907M597.5,918V921M607.5,896V907M617.5,896V907M627.5,896V907M637.5,896V907M647.5,896V907M647.5,918V921M657.5,896V907M667.5,896V907M676.5,896V907M686.5,896V907M696.5,896V907M696.5,918V921M706.5,896V907M716.5,896V907M726.5,896V907M736.5,896V907M746.5,896V907M746.5,918V921M755.5,896V907M765.5,896V907M775.5,896V907M785.5,896V907M795.5,896V907M795.5,918V921M805.5,896V907M815.5,896V907M825.5,896V907M834.5,896V907M844.5,896V907M844.5,918V921M854.5,896V907M864.5,896V907M874.5,896V907M884.5,896V907M894.5,896V907M894.5,918V921M904.5,896V907M913.5,896V907M923.5,896V907M933.5,896V907M943.5,896V907M943.5,918V921M953.5,896V907M963.5,896V907M973.5,896V907M983.5,896V907M993.5,896V907M993.5,918V921M1002.5,896V907M1012.5,896V907M1022.5,896V907M1032.5,896V907M1042.5,896V907M1042.5,918V921" stroke="#585858" stroke-width="1"/>
<path d="M59,920.5H1044M0,895.5H1096" stroke="#f4f4ec"/>
</svg>
<div class="a" style="left:39.7px;top:908px;width:30px;text-align:center;font-size:12px"><span class="t">0</span></div>
<div class="a" style="left:89.1px;top:908px;width:30px;text-align:center;font-size:12px"><span class="t">5</span></div>
<div class="a" style="left:138.5px;top:908px;width:30px;text-align:center;font-size:12px"><span class="t">10</span></div>
<div class="a" style="left:187.9px;top:908px;width:30px;text-align:center;font-size:12px"><span class="t">15</span></div>
<div class="a" style="left:237.2px;top:908px;width:30px;text-align:center;font-size:12px"><span class="t">20</span></div>
<div class="a" style="left:286.6px;top:908px;width:30px;text-align:center;font-size:12px"><span class="t">25</span></div>
<div class="a" style="left:336.0px;top:908px;width:30px;text-align:center;font-size:12px"><span class="t">30</span></div>
<div class="a" style="left:385.4px;top:908px;width:30px;text-align:center;font-size:12px"><span class="t">35</span></div>
<div class="a" style="left:434.8px;top:908px;width:30px;text-align:center;font-size:12px"><span class="t">40</span></div>
<div class="a" style="left:484.2px;top:908px;width:30px;text-align:center;font-size:12px"><span class="t">45</span></div>
<div class="a" style="left:533.6px;top:908px;width:30px;text-align:center;font-size:12px"><span class="t">50</span></div>
<div class="a" style="left:582.9px;top:908px;width:30px;text-align:center;font-size:12px"><span class="t">55</span></div>
<div class="a" style="left:632.3px;top:908px;width:30px;text-align:center;font-size:12px"><span class="t">60</span></div>
<div class="a" style="left:681.7px;top:908px;width:30px;text-align:center;font-size:12px"><span class="t">65</span></div>
<div class="a" style="left:731.1px;top:908px;width:30px;text-align:center;font-size:12px"><span class="t">70</span></div>
<div class="a" style="left:780.5px;top:908px;width:30px;text-align:center;font-size:12px"><span class="t">75</span></div>
<div class="a" style="left:829.9px;top:908px;width:30px;text-align:center;font-size:12px"><span class="t">80</span></div>
<div class="a" style="left:879.2px;top:908px;width:30px;text-align:center;font-size:12px"><span class="t">85</span></div>
<div class="a" style="left:928.6px;top:908px;width:30px;text-align:center;font-size:12px"><span class="t">90</span></div>
<div class="a" style="left:978.0px;top:908px;width:30px;text-align:center;font-size:12px"><span class="t">95</span></div>
<div class="a" style="left:1027.4px;top:908px;width:30px;text-align:center;font-size:12px"><span class="t">100</span></div>
<svg width="1280" height="972" fill="none" shape-rendering="crispEdges"><g transform="translate(13,900)" stroke="#000"><rect x="0.5" y="0.5" width="16" height="5"/><path d="M2,3.500H6L8,2.500H11L13,3.500H15" stroke-width="1"/><path d="M4.500,8V12M2.500,10L4.500,8L6.500,10M12.500,8V12M10.500,10L12.500,12L14.500,10" stroke-width="1"/><rect x="0.5" y="13.500" width="16" height="2"/></g></svg>
<div class="sunk" style="left:2px;top:924px;width:96px;height:21px;background:#dcc0c0"></div>
<div class="sunk" style="left:2px;top:947px;width:96px;height:21px;background:#fff"></div>
<div class="a" style="left:102px;top:923px;width:1px;height:47px;background:#f4f4ec;box-shadow:1px 0 0 #808080"></div>
<div class="sunk" style="left:107px;top:925px;width:327px;height:21px;padding:4px 0 0 6px;font-size:12px"><span class="tl">1 Object Selected</span></div>
<div class="sunk" style="left:107px;top:950px;width:603px;height:21px;padding:4px 0 0 6px;font-size:12px"><span class="tl">Click or click-and-drag to select objects</span></div>
<div class="sep" style="left:711px;top:952px;height:17px"></div>
<svg width="1280" height="972" fill="none"><g transform="translate(443,928)"><path d="M2.500,5V3C2.500,0.500 6.500,0.500 6.500,3V5" stroke="#202020" stroke-width="1.300"/><rect x="0.500" y="5" width="8" height="7" fill="#202020"/><path d="M1,7.500H8M1,9.500H8" stroke="#c6c6c6" stroke-width="0.8"/></g><g transform="translate(468,927)" shape-rendering="crispEdges"><rect x="0.500" y="0.500" width="14" height="14" stroke="#000" fill="#d8d8d8"/><path d="M7.500,1V14M1,7.500H14" stroke="#404040"/><circle cx="7.500" cy="7.500" r="2.300" fill="#000" shape-rendering="auto"/></g><g transform="translate(717,953)" opacity="0.75"><ellipse cx="7" cy="5" rx="5.500" ry="3.500" transform="rotate(35 7 5)" fill="#e8e8e8" stroke="#909090" stroke-width="0.8"/><path d="M6,8L5,12M2,12.500H10" stroke="#a0a0a0" stroke-width="1.300"/><path d="M3,1L11,9" stroke="#a0a0a0" stroke-width="0.8"/></g></svg>
<div class="lb" style="left:490px;top:930px;font-size:12px"><span class="tl">X:</span></div>
<div class="fld" style="left:501px;top:925px;width:58px;height:21px;padding:2px 0 0 3px;font-size:12px;color:#808080"><span class="tl">-215,592cr</span></div>
<div class="lb" style="left:573px;top:930px;font-size:12px"><span class="tl">Y:</span></div>
<div class="fld" style="left:583px;top:925px;width:57px;height:21px;padding:2px 0 0 3px;font-size:12px;color:#808080"><span class="tl">-0,0cm</span></div>
<div class="lb" style="left:655px;top:930px;font-size:12px"><span class="tl">Z:</span></div>
<div class="fld" style="left:665px;top:925px;width:57px;height:21px;padding:2px 0 0 3px;font-size:12px;color:#808080"><span class="tl">293,908cm</span></div>
<div class="sunk" style="left:737px;top:925px;width:100px;height:21px;padding:4px 0 0 6px;font-size:12px"><span class="tl">Grid = 25,4cm</span></div>
<div class="sunk" style="left:737px;top:950px;width:100px;height:21px;padding:4px 0 0 6px;font-size:12px"><span class="tl">Add Time Tag</span></div>
<div class="btn" style="left:838px;top:924px;width:44px;height:44px"></div>
<svg width="1280" height="972" fill="none"><g transform="translate(848,940)"><circle cx="4.500" cy="5" r="3.600" stroke="#000" stroke-width="2.400"/><path d="M8,5H24M19.500,5V10M23,5V9" stroke="#000" stroke-width="2.600"/></g></svg>
<div class="btn" style="left:885px;top:924px;width:48px;height:21px;line-height:22px;font-size:12px;color:#808080;text-shadow:1px 1px 0 #f4f4ec"><span class="t">Auto Key</span></div>
<div class="btn" style="left:885px;top:946px;width:48px;height:22px;line-height:22px;font-size:12px;color:#808080;text-shadow:1px 1px 0 #f4f4ec"><span class="t">Set Key</span></div>
<div class="dd" style="left:936px;top:924px;width:115px;height:20px;padding:3px 0 0 3px;font-size:12px"><span class="tl">Selected</span><div class="ar"></div></div>
<div class="btn" style="left:962px;top:947px;width:90px;height:21px;line-height:21px;font-size:12px"><span class="t">Key Filters...</span></div>
<svg width="1280" height="972" fill="none"><g transform="translate(939,950)"><path d="M1,2.500H14M1,13.500H14" stroke="#6878d0" stroke-width="1"/><path d="M2,13C5,13 6,2 9,2C11,2 12,9 14,9" stroke="#d02020" stroke-width="1.300"/><path d="M4,11.500V14.500M9,0.500V4" stroke="#2030a0"/></g><path d="M954,967h3v-3z" fill="#000"/></svg>
<div class="a" style="left:1097px;top:920px;width:183px;height:1px;background:#808080;box-shadow:0 1px 0 #f4f4ec"></div>
<div class="sep" style="left:1081px;top:927px;height:16px"></div>
<div class="sep" style="left:1153px;top:927px;height:16px"></div>
<div class="sep" style="left:1182px;top:927px;height:16px"></div>
<div class="sep" style="left:1081px;top:949px;height:16px"></div>
<div class="sep" style="left:1182px;top:949px;height:16px"></div>
<div class="fld" style="left:1083px;top:947px;width:63px;height:20px;padding:1px 0 0 3px;font-size:12px"><span class="tl">0</span></div>
<svg width="1280" height="972" fill="none">
<g fill="#000"><path d="M1060,930h2v10h-2z M1062,935l7,-4.500v9z M1069,935l7,-4.500v9z"/><path d="M1088,935l6,-4.500v9z M1095,930.500h2v9h-2z M1098.500,930.500h2v9h-2z"/><path d="M1114,930.500l8,4.500l-8,4.500z"/><path d="M1133,930.500h2v9h-2z M1136.500,930.500h2v9h-2z M1140,930.500l6,4.500l-6,4.500z"/><path d="M1158,930.500l7,4.500l-7,4.500z M1165,930.500l7,4.500l-7,4.500z M1172,930h2v10h-2z"/><path d="M1063,951.500h1.500v9h-1.500z M1072,951.500h1.500v9h-1.500z M1064.500,956l4,-3v6z M1072,956l-4,-3v6z"/><path d="M1149.500,954l3,-4l3,4z M1149.500,958l3,4l3,-4z"/><path d="M1124,943h3v-3z M1204,943h0z"/></g>
<rect x="1110" y="928" width="15" height="13" stroke="#000" stroke-width="2"/>
<g transform="translate(1164,950)"><rect x="0.500" y="0.500" width="9" height="10" stroke="#202020" fill="#d8d8d8"/><path d="M0,2.500H10" stroke="#202020"/><circle cx="9" cy="8" r="4" stroke="#902020" fill="#e8e8e8"/><path d="M9,5.500V8H11" stroke="#202020"/></g>
<circle cx="1194" cy="933" r="4.6" fill="#e8e8f0" stroke="#404060" stroke-width="1.200"/><path d="M1197.22,936.22l5,5" stroke="#2838c0" stroke-width="2"/>
<g shape-rendering="crispEdges"><rect x="1213.500" y="927.500" width="12" height="11" stroke="#7a3434" fill="none"/><path d="M1219.500,928V938M1214,933.500H1225" stroke="#7a3434"/></g><circle cx="1214" cy="937" r="3.2" fill="#e8e8f0" stroke="#404060" stroke-width="1.200"/><path d="M1216.24,939.24l5,5" stroke="#2838c0" stroke-width="2"/>
<g transform="translate(1233,927)"><path d="M0.500,4V0.500H4M12,0.500H15.500V4M15.500,11V14.500H12M4,14.500H0.500V11" stroke="#000" stroke-width="1.200"/><path d="M3.500,5.500L6,3H13V10L10.500,12.500H3.500Z" fill="#fff" stroke="#303070" stroke-width="0.9"/><path d="M3.500,5.500H10.500V12.500M10.500,5.500L13,3" stroke="#303070" stroke-width="0.9"/></g>
<g shape-rendering="crispEdges"><rect x="1260.500" y="927.500" width="12" height="11" stroke="#7a3434"/><path d="M1266.500,928V938M1261,933.500H1272" stroke="#7a3434"/></g><g transform="translate(1256,933)"><path d="M0.500,3.500L3,1H10V7L7.500,9.500H0.500Z" fill="#e8e8f0" stroke="#303070" stroke-width="0.9"/><path d="M0.500,3.500H7.500V9.500M7.500,3.500L10,1" stroke="#303070" stroke-width="0.9"/></g>
<path d="M1247,943h3v-3z" fill="#000"/>
<path d="M1271,943h3v-3z" fill="#000"/>
<rect x="1187.500" y="949.500" width="15" height="14" stroke="#000" stroke-dasharray="2 1.500" fill="#e0e0e0"/><circle cx="1194" cy="955" r="3.6" fill="#e8e8f0" stroke="#404060" stroke-width="1.200"/><path d="M1196.52,957.52l5,5" stroke="#2838c0" stroke-width="2"/>
<g transform="translate(1210,949)"><path d="M3,8L1,5C0.500,4 2,3.500 2.500,4.500L4,6.500V2C4,1 5.500,1 5.500,2V1C5.500,0 7,0 7,1V1.500C7,0.500 8.500,0.500 8.500,1.500V2.500C8.500,1.500 10,1.500 10,2.500V4C10,3 11.500,3 11.500,4V10C11.500,12 10.500,14 9,14.500H5.500C4.500,14 3.500,10 3,8Z" fill="#f4f4f4" stroke="#101010" stroke-width="1"/><path d="M5.500,2V7M7,1.500V7M8.500,2.500V7M10,4V8" stroke="#101010" stroke-width="0.8"/></g>
<g transform="translate(1233,949)"><circle cx="7.500" cy="8" r="4.200" stroke="#202020" fill="none"/><path d="M7.500,0V9M7.500,9L1,14M7.500,9L15,10" stroke="#202020" stroke-width="1.200"/><path d="M5.500,2.500L7.500,0L9.500,2.500M13,8L15.500,10L13,12" stroke="#202020" fill="none"/></g>
<g shape-rendering="crispEdges" stroke="#303070"><rect x="1256.500" y="949.500" width="11" height="11" fill="#d8d8e0"/><rect x="1263.500" y="956.500" width="8" height="7" fill="#c6c6c6"/><path d="M1259,952L1264,957M1259,952V955M1259,952H1262" shape-rendering="auto"/></g>
<path d="M1247,966h3v-3z" fill="#000"/>
</svg>
<div class="a" style="left:0;top:970px;width:1280px;height:2px;background:#245edc"></div><div class="a" style="left:0;top:970px;width:92px;height:2px;background:#3c9a3c"></div>
<!-- hand-drawn red arrows -->
<svg width="1280" height="972" fill="none">
 <defs><filter id="bl" x="-20%" y="-20%" width="140%" height="140%"><feGaussianBlur stdDeviation="0.7"/></filter></defs>
 <g transform="translate(1030,340) scale(0.102912)">
  <path d="M185,395L215,355L430,330L555,265L515,235L520,190L545,175L875,175L893,200L890,255L850,310L740,405L690,425L645,400L640,360L680,325L580,365L465,415L290,445L210,445Z" fill="#ff3300"/>
  <g stroke="#ff3300" stroke-width="50" stroke-linecap="round" stroke-linejoin="round" filter="url(#bl)">
   <path d="M165,490L250,490L400,540L520,590L600,650L700,690L840,715"/>
   <path d="M725,575L855,685L855,735L575,830"/><path d="M740,640L840,705L700,760" stroke-width="60"/>
  </g>
 </g>
</svg>

</body></html>
